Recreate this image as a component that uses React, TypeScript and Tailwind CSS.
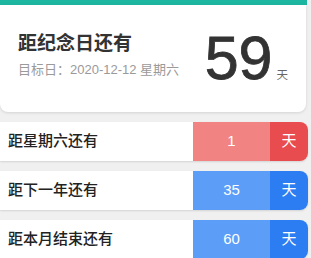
import React from "react";

const font = { fontFamily: '"Liberation Sans", "Noto Sans CJK SC", sans-serif' };

type Row = { label: string; value: string; light: string; dark: string };

const rows: Row[] = [
  { label: "距星期六还有", value: "1", light: "bg-[#f28383]", dark: "bg-[#e94c4e]" },
  { label: "距下一年还有", value: "35", light: "bg-[#5c9df7]", dark: "bg-[#2b7df1]" },
  { label: "距本月结束还有", value: "60", light: "bg-[#5c9df7]", dark: "bg-[#2b7df1]" },
];

export default function App() {
  return (
    <div className="w-[311px] h-[258px] overflow-hidden bg-[#f0f0f0]" style={font}>
      <div className="w-[307px] h-[5px] bg-[#1db7a1]" />
      <div className="w-[306px] h-[107px] bg-white rounded-b-[8px] shadow-[0_1px_3px_rgba(0,0,0,0.12)] flex justify-between px-[18px]">
        <div className="pt-[27px] flex flex-col">
          <div className="text-[19px] leading-[24px] font-bold text-[#333]">距纪念日还有</div>
          <div className="mt-[6px] text-[13px] leading-[16px] text-[#9a9a9a]">目标日：2020-12-12 星期六</div>
        </div>
        <div className="pt-[23px] flex items-baseline">
          <span className="text-[61px] leading-[60px] text-[#333] [-webkit-text-stroke:0.8px_#333]">59</span>
          <span className="ml-[4px] text-[11.5px] text-[#666]">天</span>
        </div>
      </div>
      <div className="mt-[10px] flex flex-col gap-[10px]">
        {rows.map((r) => (
          <div
            key={r.label}
            className="w-[308px] h-[39px] flex bg-white rounded-r-[8px] overflow-hidden shadow-[0_1px_2px_rgba(0,0,0,0.12)]"
          >
            <div className="flex-1 flex items-center pl-[8px] text-[15px] font-medium text-[#222]">{r.label}</div>
            <div className={`w-[77px] flex items-center justify-center text-[15px] text-white ${r.light}`}>{r.value}</div>
            <div className={`w-[38px] flex items-center justify-center text-[15px] text-white ${r.dark}`}>天</div>
          </div>
        ))}
      </div>
    </div>
  );
}
